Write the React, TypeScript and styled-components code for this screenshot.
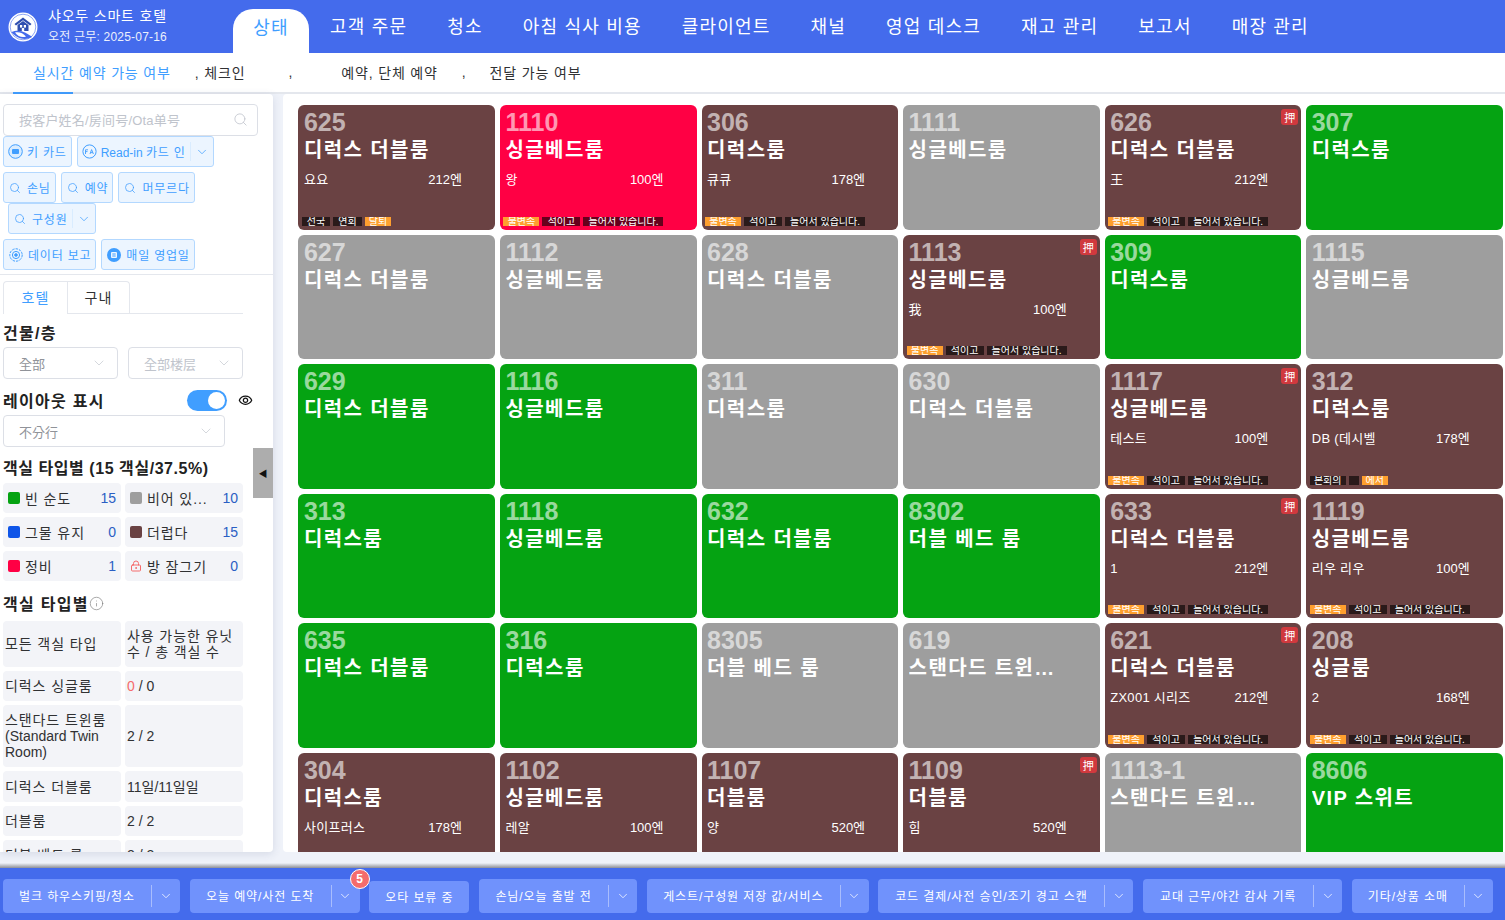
import React from 'react';
import styled, { createGlobalStyle } from 'styled-components';
import { ChevronDown, Info, LockKeyhole, Search } from 'lucide-react';
import { MdOutlineVisibility } from 'react-icons/md';

const GlobalStyle = createGlobalStyle`
  html, body {
    margin: 0;
    padding: 0;
    height: 100%;
    overflow: hidden;
  }
  body {
    font-family: "Liberation Sans", "Noto Sans CJK KR", sans-serif;
    color: #222;
  }
  * {
    box-sizing: border-box;
  }
`;

type Tone = 'dirty' | 'repair' | 'clean' | 'empty';

interface RoomData {
  no: string;
  type: string;
  tone: Tone;
  guest?: string;
  price?: string;
  deposit?: boolean;
  tags?: { text: string; hot?: boolean; width?: number }[];
}

const stayTags = [
  { text: '불변속', hot: true, width: 36 },
  { text: '석이고', width: 38 },
  { text: '들어서 있습니다.', width: 80 },
];

const rooms: RoomData[] = [
  {
    no: '625',
    type: '디럭스 더블룸',
    tone: 'dirty',
    guest: '요요',
    price: '212엔',
    tags: [
      { text: '선국', width: 28 },
      { text: '연회', width: 29 },
      { text: '달퇴', hot: true, width: 26 },
    ],
  },
  { no: '1110', type: '싱글베드룸', tone: 'repair', guest: '왕', price: '100엔', tags: stayTags },
  { no: '306', type: '디럭스룸', tone: 'dirty', guest: '큐큐', price: '178엔', tags: stayTags },
  { no: '1111', type: '싱글베드룸', tone: 'empty' },
  { no: '626', type: '디럭스 더블룸', tone: 'dirty', guest: '王', price: '212엔', deposit: true, tags: stayTags },
  { no: '307', type: '디럭스룸', tone: 'clean' },
  { no: '627', type: '디럭스 더블룸', tone: 'empty' },
  { no: '1112', type: '싱글베드룸', tone: 'empty' },
  { no: '628', type: '디럭스 더블룸', tone: 'empty' },
  { no: '1113', type: '싱글베드룸', tone: 'dirty', guest: '我', price: '100엔', deposit: true, tags: stayTags },
  { no: '309', type: '디럭스룸', tone: 'clean' },
  { no: '1115', type: '싱글베드룸', tone: 'empty' },
  { no: '629', type: '디럭스 더블룸', tone: 'clean' },
  { no: '1116', type: '싱글베드룸', tone: 'clean' },
  { no: '311', type: '디럭스룸', tone: 'empty' },
  { no: '630', type: '디럭스 더블룸', tone: 'empty' },
  { no: '1117', type: '싱글베드룸', tone: 'dirty', guest: '테스트', price: '100엔', deposit: true, tags: stayTags },
  {
    no: '312',
    type: '디럭스룸',
    tone: 'dirty',
    guest: 'DB (데시벨',
    price: '178엔',
    tags: [
      { text: '본회의', width: 36 },
      { text: '', width: 10 },
      { text: '에서', hot: true, width: 26 },
    ],
  },
  { no: '313', type: '디럭스룸', tone: 'clean' },
  { no: '1118', type: '싱글베드룸', tone: 'clean' },
  { no: '632', type: '디럭스 더블룸', tone: 'clean' },
  { no: '8302', type: '더블 베드 룸', tone: 'clean' },
  { no: '633', type: '디럭스 더블룸', tone: 'dirty', guest: '1', price: '212엔', deposit: true, tags: stayTags },
  { no: '1119', type: '싱글베드룸', tone: 'dirty', guest: '리우 리우', price: '100엔', tags: stayTags },
  { no: '635', type: '디럭스 더블룸', tone: 'clean' },
  { no: '316', type: '디럭스룸', tone: 'clean' },
  { no: '8305', type: '더블 베드 룸', tone: 'empty' },
  { no: '619', type: '스탠다드 트윈…', tone: 'empty' },
  { no: '621', type: '디럭스 더블룸', tone: 'dirty', guest: 'ZX001 시리즈', price: '212엔', deposit: true, tags: stayTags },
  { no: '208', type: '싱글룸', tone: 'dirty', guest: '2', price: '168엔', tags: stayTags },
  { no: '304', type: '디럭스룸', tone: 'dirty', guest: '사이프러스', price: '178엔' },
  { no: '1102', type: '싱글베드룸', tone: 'dirty', guest: '레알', price: '100엔' },
  { no: '1107', type: '더블룸', tone: 'dirty', guest: '양', price: '520엔' },
  { no: '1109', type: '더블룸', tone: 'dirty', guest: '힘', price: '520엔', deposit: true },
  { no: '1113-1', type: '스탠다드 트윈…', tone: 'empty' },
  { no: '8606', type: 'VIP 스위트', tone: 'clean' },
];

const navItems = ['고객 주문', '청소', '아침 식사 비용', '클라이언트', '채널', '영업 데스크', '재고 관리', '보고서', '매장 관리'];

const footerItems = [
  { label: '벌크 하우스키핑/청소', width: 148, menu: true },
  { label: '오늘 예약/사전 도착', width: 141, menu: true, badge: '5' },
  { label: '오타 보류 중', width: 100, menu: false },
  { label: '손님/오늘 출발 전', width: 129, menu: true },
  { label: '게스트/구성원 저장 값/서비스', width: 193, menu: true },
  { label: '코드 결제/사전 승인/조기 경고 스캔', width: 226, menu: true },
  { label: '교대 근무/야간 감사 기록', width: 170, menu: true },
  { label: '기타/상품 소매', width: 112, menu: true },
];

const stats = [
  { label: '빈 순도', value: 15, color: '#05a312' },
  { label: '비어 있...', value: 10, color: '#9e9e9e' },
  { label: '그물 유지', value: 0, color: '#0f55e8' },
  { label: '더럽다', value: 15, color: '#6a4243' },
  { label: '정비', value: 1, color: '#ff0044' },
  { label: '방 잠그기', value: 0, color: '' },
];

const toneColors: Record<Tone, string> = {
  dirty: '#6a4243',
  repair: '#ff0044',
  clean: '#05a312',
  empty: '#9e9e9e',
};

const Page = styled.div`
  width: 1505px;
  height: 920px;
  display: flex;
  flex-direction: column;
  background: #eff2f9;
  overflow: hidden;
`;

const Header = styled.header`
  height: 53px;
  flex: none;
  display: flex;
  align-items: flex-end;
  background: #446bec;
  color: #fff;
`;

const Brand = styled.div`
  width: 233px;
  height: 53px;
  display: flex;
  align-items: center;
  padding-left: 8px;
  gap: 10px;
`;

const BrandText = styled.div`
  display: flex;
  flex-direction: column;
  gap: 6px;
`;

const BrandName = styled.div`
  font-size: 14px;
  line-height: 16px;
  letter-spacing: 0.8px;
`;

const BrandDate = styled.div`
  font-size: 12px;
  line-height: 15px;
  letter-spacing: 0.2px;
  opacity: 0.9;
`;

const ActiveTab = styled.div`
  width: 76px;
  height: 44px;
  display: flex;
  align-items: center;
  justify-content: center;
  padding-bottom: 10px;
  background: #fff;
  border-radius: 20px 20px 0 0;
  color: #409eff;
  font-size: 18px;
  letter-spacing: 1.2px;
`;

const NavList = styled.nav`
  height: 53px;
  display: flex;
  align-items: center;
  gap: 40px;
  padding: 0 0 3px 21px;
  font-size: 18px;
  letter-spacing: 1.2px;
  white-space: nowrap;
`;

const SubNav = styled.div`
  height: 41px;
  flex: none;
  position: relative;
  display: flex;
  align-items: center;
  padding: 0 0 2px 33px;
  background: #fff;
  border-bottom: 2px solid #e4e7ed;
  font-size: 14px;
  letter-spacing: 0.85px;
  color: #303133;
  white-space: nowrap;
`;

const SubItem = styled.span<{ $left?: number; $active?: boolean }>`
  margin-left: ${(p) => p.$left ?? 0}px;
  color: ${(p) => (p.$active ? '#409eff' : '#303133')};
`;

const SubUnderline = styled.i`
  position: absolute;
  left: 13px;
  bottom: -2px;
  width: 60px;
  height: 2px;
  background: #409eff;
`;

const Main = styled.main`
  height: 758px;
  flex: none;
  display: flex;
  gap: 10px;
`;

const Sidebar = styled.aside`
  width: 273px;
  flex: none;
  position: relative;
  background: #fff;
  border-radius: 0 4px 4px 0;
  box-shadow: 0 2px 8px rgba(60, 70, 110, 0.14);
  overflow: hidden;
`;

const SidebarTop = styled.div`
  padding: 10px 0 4px 3px;
  border-bottom: 1px solid #e4e7ed;
`;

const SearchBox = styled.div`
  width: 255px;
  height: 32px;
  display: flex;
  align-items: center;
  justify-content: space-between;
  padding: 0 9px 2px 15px;
  border: 1px solid #dcdfe6;
  border-radius: 4px;
  color: #c0c4cc;
  font-size: 13px;
  letter-spacing: 0.2px;
`;

const ToolRow = styled.div<{ $indent?: number; $bottom?: number }>`
  display: flex;
  gap: 5px;
  margin-left: ${(p) => p.$indent ?? 0}px;
  margin-bottom: ${(p) => p.$bottom ?? 0}px;
`;

const ToolButton = styled.div`
  height: 31px;
  display: flex;
  align-items: center;
  gap: 4px;
  padding: 0 4px;
  background: #ecf5ff;
  border: 1px solid #b3d8ff;
  border-radius: 3px;
  color: #409eff;
  font-size: 12px;
  letter-spacing: 0.8px;
  white-space: nowrap;
`;

const QueryIcon = styled(Search)`
  margin: 0 2px 0 1px;
`;

const RoundIcon = styled.svg`
  margin: 0 1px;
`;

const LatinText = styled.span`
  letter-spacing: 0;
`;

const ToolDivider = styled.span`
  width: 1px;
  height: 19px;
  background: #d9ecff;
`;

const SidebarBody = styled.div`
  padding: 6px 0 0 3px;
`;

const TabRow = styled.div`
  width: 240px;
  height: 33px;
  display: flex;
  border-bottom: 1px solid #e4e7ed;
`;

const SideTab = styled.div<{ $active?: boolean }>`
  width: ${(p) => (p.$active ? 65 : 62)}px;
  height: ${(p) => (p.$active ? 33 : 32)}px;
  display: flex;
  align-items: center;
  justify-content: center;
  padding-bottom: 2px;
  background: #fff;
  border: 1px solid #e4e7ed;
  border-left: ${(p) => (p.$active ? '1px solid #e4e7ed' : 'none')};
  border-bottom: none;
  border-radius: ${(p) => (p.$active ? '4px 0 0 0' : '0 4px 0 0')};
  color: ${(p) => (p.$active ? '#409eff' : '#303133')};
  font-size: 14px;
  letter-spacing: 1px;
`;

const SectionTitle = styled.div<{ $spacing?: number }>`
  display: flex;
  align-items: center;
  height: 20px;
  font-size: 16px;
  font-weight: 700;
  letter-spacing: ${(p) => p.$spacing ?? 1.3}px;
  color: #222;
  white-space: nowrap;
`;

const SelectRow = styled.div`
  display: flex;
  gap: 10px;
  margin-top: 5px;
`;

const SelectBox = styled.div<{ $width: number; $muted?: boolean }>`
  width: ${(p) => p.$width}px;
  height: 32px;
  display: flex;
  align-items: center;
  justify-content: space-between;
  padding: 0 10px 0 15px;
  border: 1px solid #dcdfe6;
  border-radius: 4px;
  color: ${(p) => (p.$muted ? '#c0c4cc' : '#909399')};
  font-size: 13px;
`;

const LayoutRow = styled.div`
  width: 250px;
  display: flex;
  align-items: center;
  margin-top: 11px;
  height: 20px;
`;

const Toggle = styled.div`
  width: 40px;
  height: 21px;
  display: flex;
  justify-content: flex-end;
  align-items: center;
  margin-left: auto;
  margin-right: 11px;
  padding-right: 2px;
  background: #409eff;
  border-radius: 11px;
`;

const ToggleKnob = styled.i`
  width: 17px;
  height: 17px;
  background: #fff;
  border-radius: 50%;
`;

const CellGrid = styled.div`
  width: 240px;
  display: grid;
  grid-template-columns: 118px 118px;
  gap: 4px;
`;

const StatCell = styled.div`
  height: 30px;
  display: flex;
  align-items: center;
  padding: 0 5px;
  background: #f3f4f8;
  border-radius: 4px;
  font-size: 14px;
  letter-spacing: 0.9px;
  color: #303133;
  white-space: nowrap;
`;

const Swatch = styled.i<{ $color: string }>`
  width: 12px;
  height: 12px;
  flex: none;
  margin-right: 5px;
  border-radius: 2px;
  background: ${(p) => p.$color};
`;

const StatValue = styled.span`
  margin-left: auto;
  letter-spacing: 0;
  color: #2a5fc4;
`;

const TypeCell = styled.div<{ $height: number }>`
  height: ${(p) => p.$height}px;
  padding: 0 2px;
  display: flex;
  align-items: center;
  background: #f3f4f8;
  border-radius: 4px;
  font-size: 14px;
  line-height: 16px;
  letter-spacing: 0.9px;
  color: #303133;
`;

const TypeText = styled.div``;

const Zero = styled.span`
  color: #f56c6c;
  white-space: pre;
`;

const Collapse = styled.div`
  position: absolute;
  top: 354px;
  right: 0;
  width: 20px;
  height: 50px;
  display: flex;
  align-items: center;
  justify-content: center;
  background: #adadad;
  color: #111;
  font-size: 9px;
`;

const Board = styled.section`
  flex: 1;
  min-width: 0;
  padding: 11.1px 2.25px 0 15.45px;
  background: #fff;
  border-radius: 4px 0 0 4px;
  overflow: hidden;
`;

const RoomGrid = styled.div`
  display: grid;
  grid-template-columns: repeat(6, 1fr);
  grid-auto-rows: 124.6px;
  gap: 5px;
`;

const Card = styled.div<{ $tone: Tone }>`
  position: relative;
  min-width: 0;
  display: flex;
  flex-direction: column;
  padding: 4px 6px 4px 5.5px;
  border-radius: 6px;
  background: ${(p) => toneColors[p.$tone]};
  color: #fff;
  overflow: hidden;
`;

const RoomNo = styled.div`
  height: 27px;
  font-size: 25px;
  line-height: 27px;
  font-weight: 700;
  color: rgba(255, 255, 255, 0.6);
`;

const RoomType = styled.div`
  height: 25px;
  margin-top: 2px;
  font-size: 20px;
  line-height: 25px;
  font-weight: 700;
  letter-spacing: 1.4px;
  white-space: nowrap;
  overflow: hidden;
`;

const GuestRow = styled.div`
  display: flex;
  justify-content: space-between;
  margin-top: 8px;
  padding-right: 27px;
  font-size: 13px;
  line-height: 18px;
`;

const GuestName = styled.span`
  letter-spacing: 0.3px;
`;

const TagRow = styled.div`
  display: flex;
  gap: 3px;
  margin-top: auto;
  margin-left: -2px;
  height: 9px;
  overflow: hidden;
`;

const Tag = styled.span<{ $hot?: boolean }>`
  flex: none;
  height: 9px;
  font-size: 10px;
  line-height: 9px;
  text-align: center;
  white-space: nowrap;
  overflow: hidden;
  background: ${(p) => (p.$hot ? '#ff9f2e' : 'rgba(0, 0, 0, 0.6)')};
`;

const Deposit = styled.span`
  position: absolute;
  top: 4px;
  right: 3px;
  width: 17px;
  height: 16px;
  display: flex;
  align-items: center;
  justify-content: center;
  background: #d0393e;
  border-radius: 3px;
  font-size: 11px;
  font-family: "Noto Sans CJK SC", sans-serif;
`;

const FooterShade = styled.div`
  height: 5px;
  flex: none;
  margin-top: 11px;
  background: linear-gradient(#eff2f9, #8d8f96);
`;

const Footer = styled.footer`
  flex: 1;
  display: flex;
  align-items: flex-end;
  gap: 9.7px;
  padding: 0 0 7px 3px;
  background: #446bec;
`;

const FooterGroup = styled.div<{ $short?: boolean }>`
  position: relative;
  display: flex;
  height: ${(p) => (p.$short ? 32 : 34)}px;
  background: #7092fc;
  border-radius: 4px;
  color: #fff;
  font-size: 12px;
  letter-spacing: 0.9px;
`;

const FooterLabel = styled.div<{ $width: number }>`
  width: ${(p) => p.$width}px;
  display: flex;
  align-items: center;
  justify-content: center;
  padding-bottom: 1px;
  white-space: nowrap;
`;

const FooterCaret = styled.div`
  width: 29px;
  display: flex;
  align-items: center;
  justify-content: center;
  position: relative;
  &::before {
    content: '';
    position: absolute;
    left: 0;
    top: 6px;
    bottom: 6px;
    width: 1px;
    background: rgba(255, 255, 255, 0.4);
  }
`;

const Badge = styled.span`
  position: absolute;
  top: -10px;
  right: -10px;
  width: 20px;
  height: 20px;
  display: flex;
  align-items: center;
  justify-content: center;
  background: #f56c6c;
  border: 1px solid #fff;
  border-radius: 50%;
  font-size: 12px;
  font-weight: 700;
  letter-spacing: 0;
`;

const Logo = () => (
  <svg width="30" height="30" viewBox="0 0 30 30">
    <circle cx="15" cy="15" r="14.5" fill="#fff" />
    <circle cx="15" cy="15" r="12.8" fill="none" stroke="#446bec" strokeWidth="0.6" />
    <path d="M15 5.5 L6.5 12 L8 13.5 L15 8.2 L22 13.5 L23.5 12 Z" fill="#2f4fb0" />
    <path d="M9.5 13 L15 9 L20.5 13 V19 H9.5 Z" fill="#2f4fb0" />
    <rect x="12" y="13" width="2.2" height="2.6" fill="#fff" />
    <rect x="15.8" y="13" width="2.2" height="2.6" fill="#fff" />
    <rect x="13.8" y="16" width="2.4" height="3" fill="#fff" />
    <path d="M3.5 20 C9 17.5 14 19 17 20.5 C20 22 23 24 24 25 C18 28.5 9 27.5 3.5 20 Z" fill="#446bec" />
    <path d="M7 20.5 C11 19.5 15 21 18 24.5 C14 26 10 24.5 7 20.5 Z" fill="#fff" />
  </svg>
);

const KeyIcon = () => (
  <svg width="15" height="15" viewBox="0 0 15 15">
    <circle cx="7.5" cy="7.5" r="6.8" fill="#d9ecff" stroke="#409eff" />
    <rect x="4" y="5" width="7" height="5" rx="1" fill="#409eff" />
  </svg>
);

const ReadIcon = () => (
  <svg width="15" height="15" viewBox="0 0 15 15" fill="none" stroke="#409eff">
    <circle cx="7.5" cy="7.5" r="6.6" />
    <path d="M3.5 5.8 H6 M3.5 7.6 H5.5 M3.5 5.8 V10 M8 10 L9.6 5.6 L11.4 10 M8.6 8.6 H10.8" strokeWidth="0.9" />
  </svg>
);

const ReportIcon = () => (
  <RoundIcon width="14" height="14" viewBox="0 0 14 14" fill="none" stroke="#409eff">
    <circle cx="7" cy="7" r="6.2" strokeDasharray="2.5 1" />
    <circle cx="7" cy="7" r="3.6" />
    <circle cx="7" cy="7" r="1.3" fill="#409eff" />
  </RoundIcon>
);

const DailyIcon = () => (
  <RoundIcon width="14" height="14" viewBox="0 0 14 14">
    <circle cx="7" cy="7" r="7" fill="#409eff" />
    <rect x="4" y="4" width="6" height="6" rx="1" fill="#ecf5ff" />
    <path d="M5.3 6 H8.7 M5.3 8 H8.7" stroke="#409eff" />
  </RoundIcon>
);

const Room: React.FC<{ room: RoomData }> = ({ room }) => (
  <Card $tone={room.tone}>
    <RoomNo>{room.no}</RoomNo>
    <RoomType>{room.type}</RoomType>
    {room.guest && (
      <GuestRow>
        <GuestName>{room.guest}</GuestName>
        <span>{room.price}</span>
      </GuestRow>
    )}
    {room.tags && (
      <TagRow>
        {room.tags.map((tag, i) => (
          <Tag key={i} $hot={tag.hot} style={{ width: tag.width }}>
            {tag.text}
          </Tag>
        ))}
      </TagRow>
    )}
    {room.deposit && <Deposit>押</Deposit>}
  </Card>
);

const App: React.FC = () => (
  <Page>
    <GlobalStyle />
    <Header>
      <Brand>
        <Logo />
        <BrandText>
          <BrandName>샤오두 스마트 호텔</BrandName>
          <BrandDate>오전 근무: 2025-07-16</BrandDate>
        </BrandText>
      </Brand>
      <ActiveTab>상태</ActiveTab>
      <NavList>
        {navItems.map((item) => (
          <span key={item}>{item}</span>
        ))}
      </NavList>
    </Header>

    <SubNav>
      <SubItem $active>실시간 예약 가능 여부</SubItem>
      <SubItem $left={24}>, 체크인</SubItem>
      <SubItem $left={43}>,</SubItem>
      <SubItem $left={48}>예약, 단체 예약</SubItem>
      <SubItem $left={24}>,</SubItem>
      <SubItem $left={23}>전달 가능 여부</SubItem>
      <SubUnderline />
    </SubNav>

    <Main>
      <Sidebar>
        <SidebarTop>
          <SearchBox>
            <span>按客户姓名/房间号/Ota单号</span>
            <Search size={15} strokeWidth={1.3} />
          </SearchBox>
          <ToolRow $bottom={5}>
            <ToolButton>
              <KeyIcon />키 카드
            </ToolButton>
            <ToolButton>
              <ReadIcon />
              <span>
                <LatinText>Read-in </LatinText>카드 인
              </span>
              <ToolDivider />
              <ChevronDown size={14} strokeWidth={1.3} />
            </ToolButton>
          </ToolRow>
          <ToolRow>
            <ToolButton>
              <QueryIcon size={12} strokeWidth={1.5} />
              손님
            </ToolButton>
            <ToolButton>
              <QueryIcon size={12} strokeWidth={1.5} />
              예약
            </ToolButton>
            <ToolButton>
              <QueryIcon size={12} strokeWidth={1.5} />
              머무르다
            </ToolButton>
          </ToolRow>
          <ToolRow $indent={5} $bottom={5}>
            <ToolButton>
              <QueryIcon size={12} strokeWidth={1.5} />
              구성원
              <ToolDivider />
              <ChevronDown size={14} strokeWidth={1.3} />
            </ToolButton>
          </ToolRow>
          <ToolRow>
            <ToolButton>
              <ReportIcon />
              데이터 보고
            </ToolButton>
            <ToolButton>
              <DailyIcon />
              매일 영업일
            </ToolButton>
          </ToolRow>
        </SidebarTop>

        <SidebarBody>
          <TabRow>
            <SideTab $active>호텔</SideTab>
            <SideTab>구내</SideTab>
          </TabRow>
          <SectionTitle style={{ marginTop: 8 }}>건물/층</SectionTitle>
          <SelectRow>
            <SelectBox $width={115}>
              全部
              <ChevronDown size={16} strokeWidth={1} color="#c0c4cc" />
            </SelectBox>
            <SelectBox $width={115} $muted>
              全部楼层
              <ChevronDown size={16} strokeWidth={1} color="#c0c4cc" />
            </SelectBox>
          </SelectRow>
          <LayoutRow>
            <SectionTitle>레이아웃 표시</SectionTitle>
            <Toggle>
              <ToggleKnob />
            </Toggle>
            <MdOutlineVisibility size={15} color="#111" />
          </LayoutRow>
          <SelectRow>
            <SelectBox $width={222}>
              不分行
              <ChevronDown size={16} strokeWidth={1} color="#c0c4cc" />
            </SelectBox>
          </SelectRow>
          <SectionTitle $spacing={0.55} style={{ margin: '10px 0 6px' }}>
            객실 타입별 (15 객실/37.5%)
          </SectionTitle>
          <CellGrid>
            {stats.map((stat) => (
              <StatCell key={stat.label}>
                {stat.color ? (
                  <Swatch $color={stat.color} />
                ) : (
                  <LockKeyhole size={12} color="#f56c6c" style={{ marginRight: 5 }} />
                )}
                {stat.label}
                <StatValue>{stat.value}</StatValue>
              </StatCell>
            ))}
          </CellGrid>
          <SectionTitle style={{ margin: '12px 0 8px' }}>
            객실 타입별
            <Info size={15} strokeWidth={1} color="#777" />
          </SectionTitle>
          <CellGrid>
            <TypeCell $height={46}>모든 객실 타입</TypeCell>
            <TypeCell $height={46}>
              <TypeText>사용 가능한 유닛 수 / 총 객실 수</TypeText>
            </TypeCell>
            <TypeCell $height={30}>디럭스 싱글룸</TypeCell>
            <TypeCell $height={30}>
              <LatinText>
                <Zero>0</Zero> / 0
              </LatinText>
            </TypeCell>
            <TypeCell $height={62}>
              <TypeText>
                스탠다드 트윈룸 <LatinText>(Standard Twin Room)</LatinText>
              </TypeText>
            </TypeCell>
            <TypeCell $height={62}>
              <LatinText>2 / 2</LatinText>
            </TypeCell>
            <TypeCell $height={31}>디럭스 더블룸</TypeCell>
            <TypeCell $height={31}>
              <LatinText>11일/11일일</LatinText>
            </TypeCell>
            <TypeCell $height={30}>더블룸</TypeCell>
            <TypeCell $height={30}>
              <LatinText>2 / 2</LatinText>
            </TypeCell>
            <TypeCell $height={30}>더블 베드 룸</TypeCell>
            <TypeCell $height={30}>
              <LatinText>2 / 2</LatinText>
            </TypeCell>
          </CellGrid>
        </SidebarBody>
        <Collapse>◀</Collapse>
      </Sidebar>

      <Board>
        <RoomGrid>
          {rooms.map((room) => (
            <Room key={room.no} room={room} />
          ))}
        </RoomGrid>
      </Board>
    </Main>

    <FooterShade />
    <Footer>
      {footerItems.map((item) => (
        <FooterGroup key={item.label} $short={!item.menu}>
          <FooterLabel $width={item.width}>{item.label}</FooterLabel>
          {item.menu && (
            <FooterCaret>
              <ChevronDown size={14} strokeWidth={1.3} />
            </FooterCaret>
          )}
          {item.badge && <Badge>{item.badge}</Badge>}
        </FooterGroup>
      ))}
    </Footer>
  </Page>
);

export default App;
